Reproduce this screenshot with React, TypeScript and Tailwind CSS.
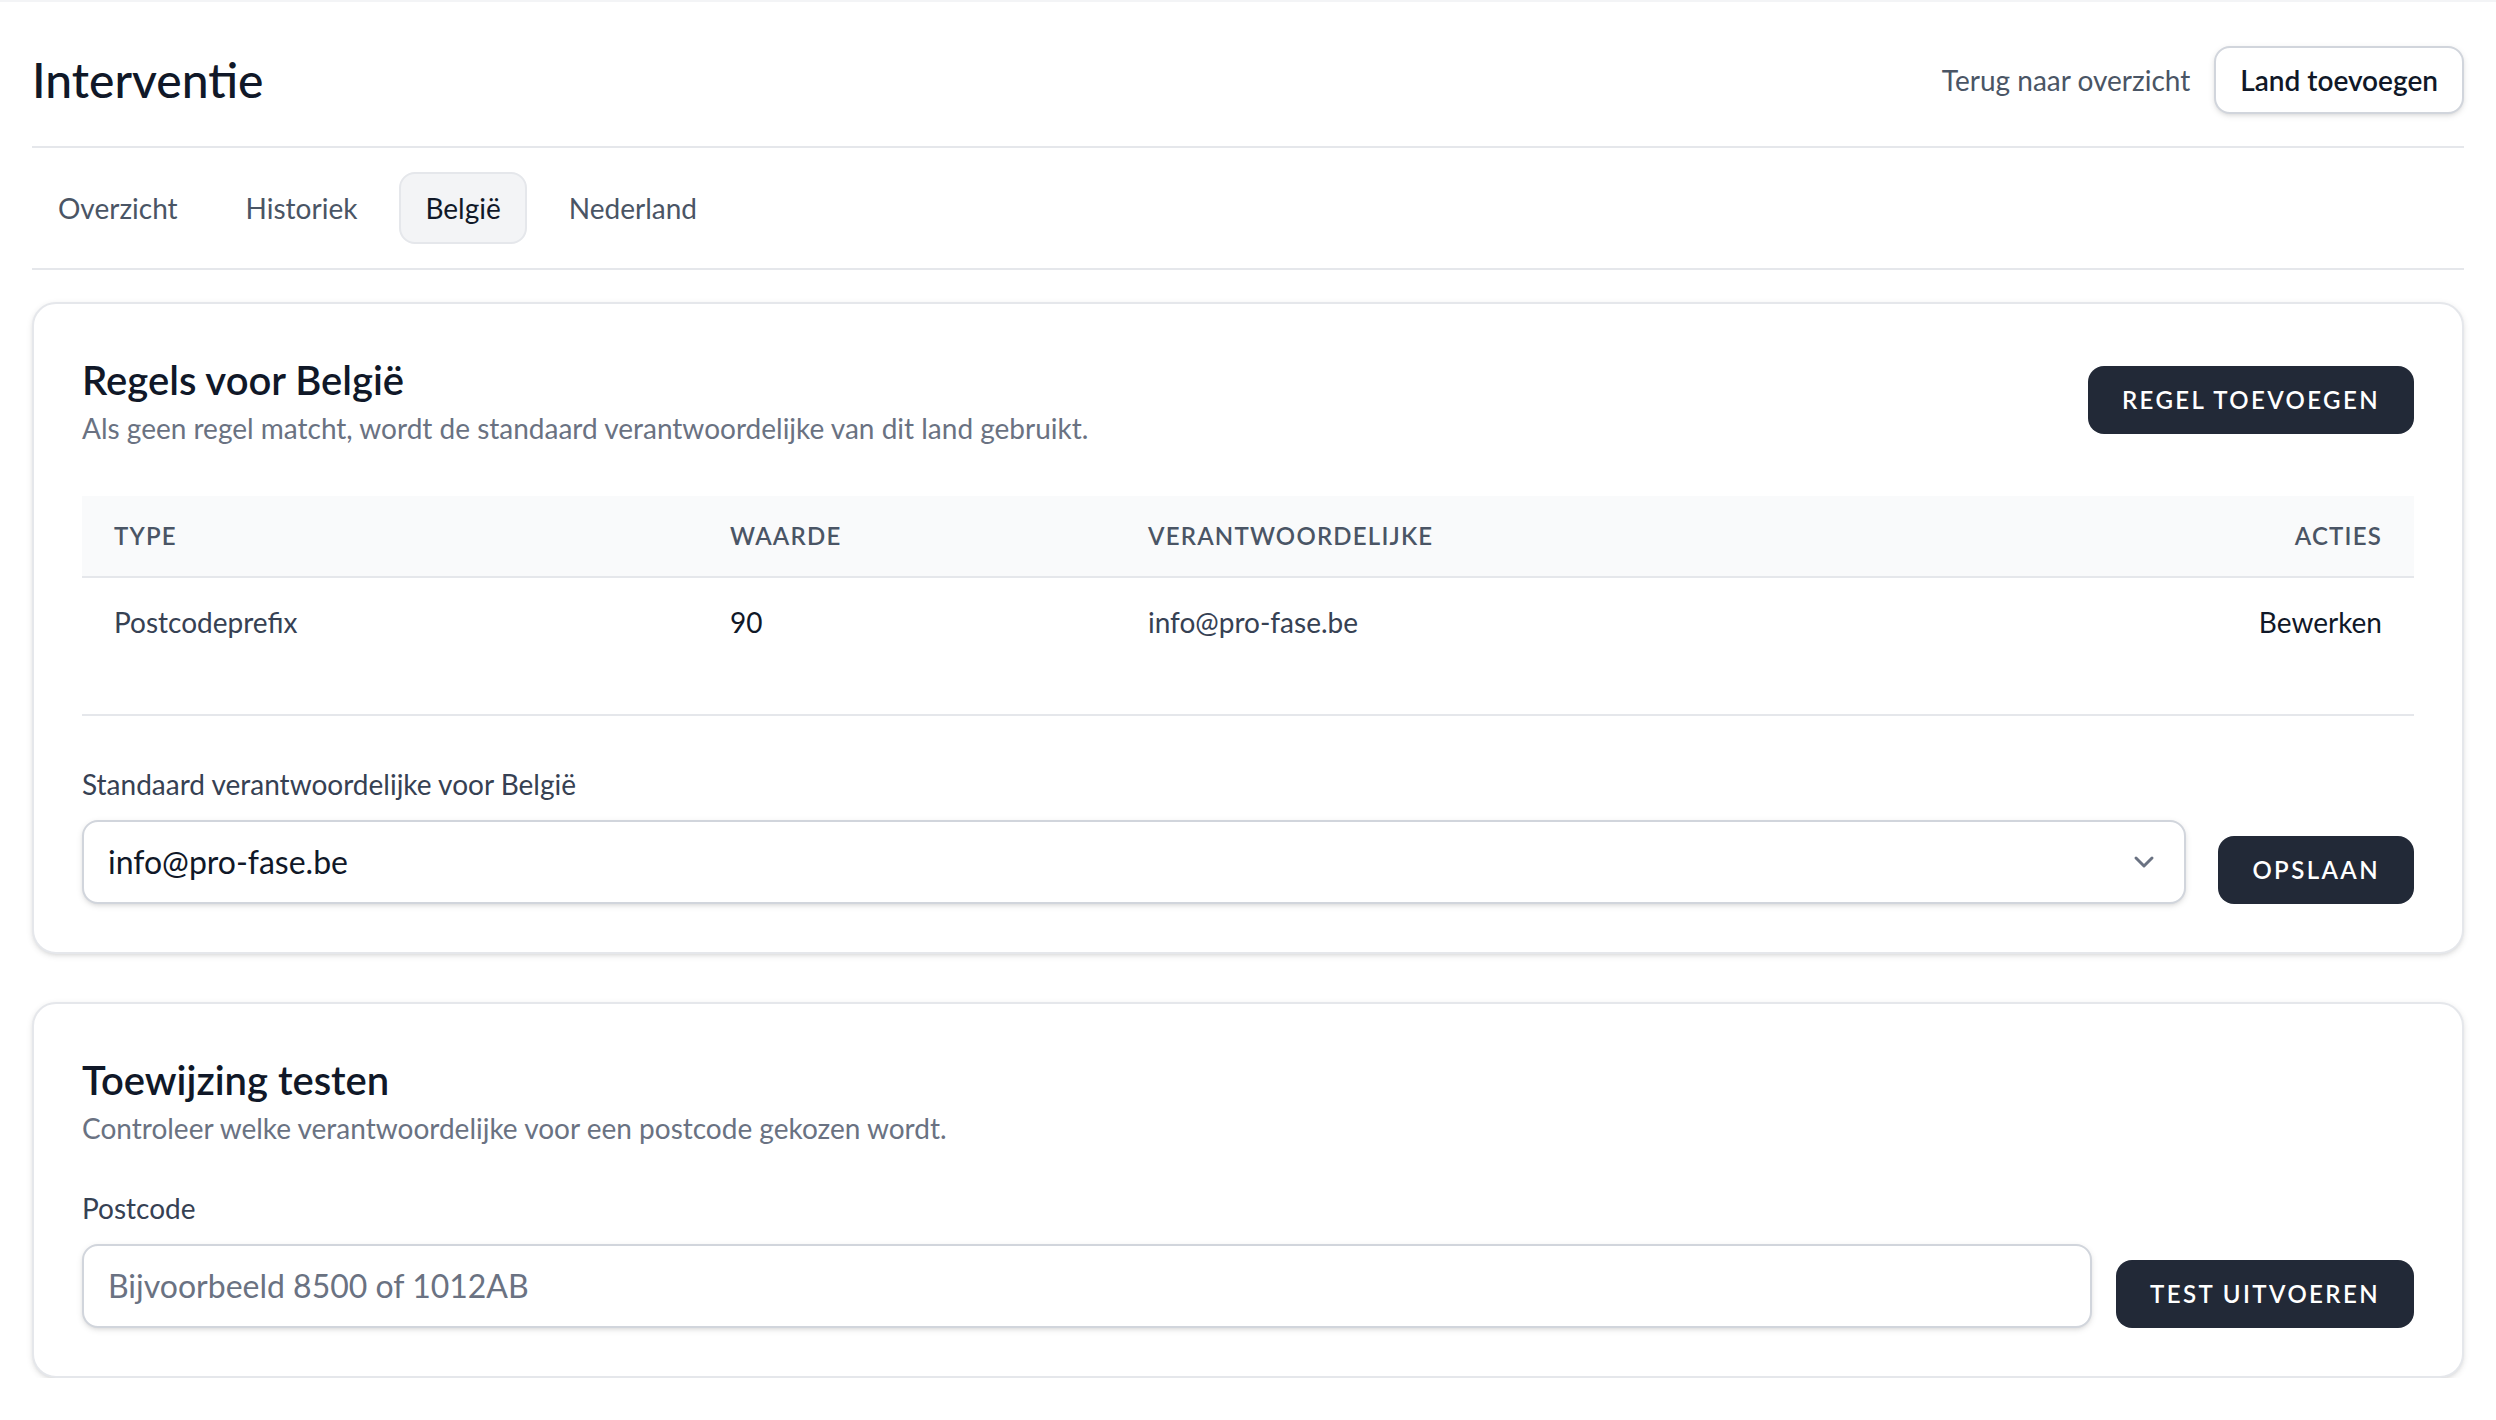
import { ChevronDown } from "lucide-react";

const tabs = ["Overzicht", "Historiek", "België", "Nederland"];

function DarkButton({ label }: { label: string }) {
  return (
    <button
      type="button"
      className="shrink-0 rounded-lg bg-[#222937] px-[17px] py-[9px] text-xs font-semibold uppercase leading-4 tracking-widest text-white"
    >
      {label}
    </button>
  );
}

function CardHeader({ title, subtitle }: { title: string; subtitle: string }) {
  return (
    <div>
      <h2 className="text-xl font-semibold leading-7 text-gray-900">{title}</h2>
      <p className="text-sm text-gray-500">{subtitle}</p>
    </div>
  );
}

export default function App() {
  return (
    <div className="border-t border-gray-100 bg-white font-['Lato',sans-serif] text-gray-900 [zoom:2]">
      <div className="px-4">
        <header className="flex items-center justify-between border-b border-gray-200 pb-4 pt-[22px]">
          <h1 className="text-2xl font-medium leading-8 text-gray-900">Interventie</h1>
          <div className="flex items-center gap-3">
            <a className="text-sm text-gray-600">Terug naar overzicht</a>
            <button
              type="button"
              className="rounded-lg border border-gray-300 bg-white px-3 py-1.5 text-sm font-semibold text-gray-900 shadow-sm"
            >
              Land toevoegen
            </button>
          </div>
        </header>

        <nav className="flex gap-2 border-b border-gray-200 py-3">
          {tabs.map((tab) =>
            tab === "België" ? (
              <span
                key={tab}
                className="rounded-lg border border-gray-200 bg-gray-100 px-3 py-[7px] text-sm text-gray-900"
              >
                {tab}
              </span>
            ) : (
              <span
                key={tab}
                className="rounded-lg border border-transparent px-3 py-[7px] text-sm text-gray-600"
              >
                {tab}
              </span>
            )
          )}
        </nav>

        <main className="mt-4 space-y-6">
          <section className="rounded-xl border border-gray-200 bg-white p-6 shadow-sm">
            <div className="flex items-center justify-between gap-4">
              <CardHeader
                title="Regels voor België"
                subtitle="Als geen regel matcht, wordt de standaard verantwoordelijke van dit land gebruikt."
              />
              <DarkButton label="Regel toevoegen" />
            </div>

            <table className="mt-6 w-full text-left">
              <thead className="border-b border-gray-200 bg-gray-50">
                <tr className="text-xs font-semibold uppercase tracking-wider text-gray-600">
                  <th className="w-[308px] px-4 py-3 font-semibold">Type</th>
                  <th className="w-[209px] px-4 py-3 font-semibold">Waarde</th>
                  <th className="px-4 py-3 font-semibold">Verantwoordelijke</th>
                  <th className="px-4 py-3 text-right font-semibold">Acties</th>
                </tr>
              </thead>
              <tbody>
                <tr className="text-sm">
                  <td className="px-4 py-3 text-gray-700">Postcodeprefix</td>
                  <td className="px-4 py-3 text-gray-900">90</td>
                  <td className="px-4 py-3 text-gray-700">info@pro-fase.be</td>
                  <td className="px-4 py-3 text-right text-gray-900">Bewerken</td>
                </tr>
              </tbody>
            </table>

            <div className="mt-6 border-t border-gray-200 pt-6">
              <label className="block text-sm text-gray-700">
                Standaard verantwoordelijke voor België
              </label>
              <div className="mt-2 flex items-end gap-4">
                <div className="flex flex-1 items-center justify-between rounded-lg border border-gray-300 bg-white px-3 py-2 shadow-sm">
                  <span className="text-base text-gray-900">info@pro-fase.be</span>
                  <ChevronDown className="h-4 w-4 text-gray-500" strokeWidth={2.25} />
                </div>
                <DarkButton label="Opslaan" />
              </div>
            </div>
          </section>

          <section className="rounded-xl border border-gray-200 bg-white p-6 shadow-sm">
            <CardHeader
              title="Toewijzing testen"
              subtitle="Controleer welke verantwoordelijke voor een postcode gekozen wordt."
            />
            <label className="mt-5 block text-sm text-gray-700">Postcode</label>
            <div className="mt-2 flex items-end gap-3">
              <input
                className="flex-1 rounded-lg border border-gray-300 bg-white px-3 py-2 text-base text-gray-900 shadow-sm outline-none placeholder:text-gray-500"
                placeholder="Bijvoorbeeld 8500 of 1012AB"
              />
              <DarkButton label="Test uitvoeren" />
            </div>
          </section>
        </main>
      </div>
    </div>
  );
}
